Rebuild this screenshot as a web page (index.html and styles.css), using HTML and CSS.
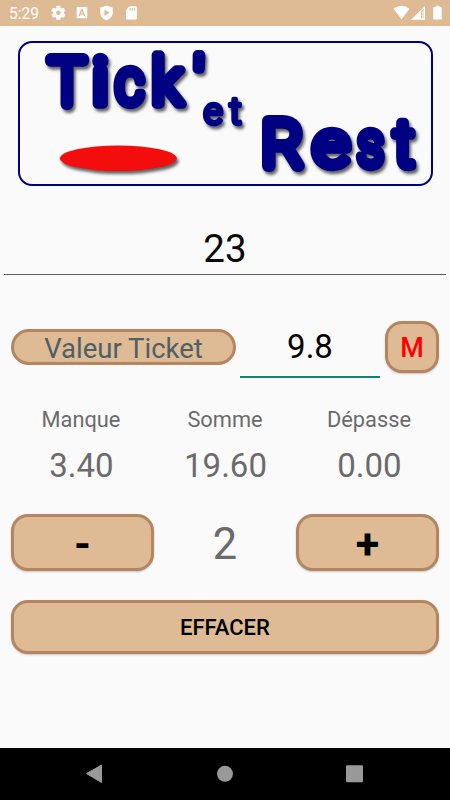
FILE: index.html
```
<!DOCTYPE html>
<html lang="fr">
<head>
<meta charset="utf-8">
<title>Tick' et Rest</title>
<link rel="stylesheet" href="styles.css">
</head>
<body>
<header class="status">
  <span class="clock">5:29</span>
  <svg class="status-left" width="90" height="16" viewBox="0 0 90 16" fill="#fff">
    <path fill-rule="evenodd" d="M5.500 0h4l.5 2.500 1.200.7 2.300-.9 2 3.400-1.900 1.500v1.600l1.900 1.500-2 3.400-2.300-.9-1.200.7-.5 2.500h-4l-.5-2.500-1.200-.7-2.300.9-2-3.400 1.900-1.500V7.200L-.5 5.700l2-3.400 2.300.9L5 2.500zM7.500 5.400a2.600 2.600 0 1 0 0 5.200 2.600 2.600 0 0 0 0-5.200z" transform="translate(.8 .8) scale(.88)"/>
    <path fill-rule="evenodd" d="M26.500 2h9a.8.8 0 0 1 .8.8v10.400h-10.600V2.800a.8.8 0 0 1 .8-.8zM30.100 4l-2.600 7h1.600l.5-1.500h2.600l.5 1.500h1.600l-2.600-7zM30.900 5.700l.9 2.600h-1.800zM34 11.500v.8h1.500v-.8z"/>
    <path fill-rule="evenodd" d="M55.500.5l6.300 2.300v4.500c0 4-2.700 6.500-6.300 8-3.600-1.500-6.300-4-6.300-8V2.800zM53.500 4.500v6.500l5.200-3.250z"/>
    <path fill-rule="evenodd" d="M78.500 1.300h6.200a1.200 1.200 0 0 1 1.200 1.200v10.800a1.200 1.200 0 0 1-1.200 1.200h-8.400a1.200 1.200 0 0 1-1.200-1.200V5zM78.700 3v2.500h1.100V3zm2.100 0v2.500h1.100V3zm2.100 0v2.500H84V3z"/>
  </svg>
  <svg class="status-right" width="50" height="16" viewBox="0 0 50 16" fill="#fff">
    <path d="M1.500 3.800Q9.500-2.300 17.500 3.800L9.500 14.200z"/>
    <path fill-rule="evenodd" d="M19 14.700L33 .9V14.700zM29 6.200V13.200h2.500V4z"/>
    <path d="M29.700 6h1.300v7h-1.300z" fill-opacity=".6"/>
    <path d="M43.800.8h3.400v1.300h1.700a.8.800 0 0 1 .8.800v10.800a.8.800 0 0 1-.8.800h-6.900a.8.800 0 0 1-.8-.8V2.900a.8.800 0 0 1 .8-.8h1.800z"/>
  </svg>
</header>

<main class="screen">
  <svg class="logo" width="416" height="146" viewBox="18 41 416 146">
    <rect x="19" y="42" width="413" height="143" rx="13" fill="none" stroke="#000082" stroke-width="2"/>
    <ellipse class="cast" cx="118.300" cy="158.300" rx="58.500" ry="12.800" fill="#f40d0d"/>
    <g class="cast word">
      <text class="big" y="103.500"><tspan class="cap" x="49" textLength="36" lengthAdjust="spacingAndGlyphs">T</tspan><tspan class="dotted" x="92.500">i</tspan><tspan x="115" textLength="29" lengthAdjust="spacingAndGlyphs">c</tspan><tspan x="151.500" textLength="31" lengthAdjust="spacingAndGlyphs">k</tspan><tspan x="193.500">'</tspan></text>
      <text class="small" y="123.500" x="203.500 229.500">et</text>
      <text class="big" y="165.500"><tspan class="cap" x="262">R</tspan><tspan x="312.500" textLength="37" lengthAdjust="spacingAndGlyphs">e</tspan><tspan x="357" textLength="27" lengthAdjust="spacingAndGlyphs">s</tspan><tspan x="394" textLength="20" lengthAdjust="spacingAndGlyphs">t</tspan></text>
    </g>
  </svg>

  <div class="amount">23</div>

  <section class="ticket">
    <div class="pill">Valeur Ticket</div>
    <div class="value">9.8</div>
    <button class="btn memory">M</button>
  </section>

  <section class="totals">
    <div><div class="label">Manque</div><div class="figure">3.40</div></div>
    <div><div class="label">Somme</div><div class="figure">19.60</div></div>
    <div><div class="label">Dépasse</div><div class="figure">0.00</div></div>
  </section>

  <section class="counter">
    <button class="btn step">-</button>
    <div class="count">2</div>
    <button class="btn step">+</button>
  </section>

  <button class="btn clear">EFFACER</button>
</main>

<nav class="navbar">
  <svg width="450" height="52" viewBox="0 0 450 52" fill="#999">
    <path d="M86.500 25.600L101.500 17v17.500z" stroke="#999" stroke-linejoin="round"/>
    <circle cx="225" cy="25.800" r="8"/>
    <rect x="346" y="17.300" width="17" height="17" rx="1"/>
  </svg>
</nav>
</body>
</html>
```

FILE: styles.css
```
* { box-sizing: border-box; }

body {
  margin: 0;
  width: 450px;
  height: 800px;
  display: flex;
  flex-direction: column;
  background: #fafafa;
  font-family: Roboto, sans-serif;
  overflow: hidden;
}

svg { display: block; }

.status {
  height: 26px;
  background: #debb95;
  display: flex;
  align-items: center;
  padding: 0 8px 0 9px;
  color: #fff;
}

.clock {
  width: 42px;
  font-size: 15.600px;
  line-height: 26px;
  padding-top: 2px;
}

.status-right { margin-left: auto; }

.screen {
  flex: 1;
  display: flex;
  flex-direction: column;
  padding-top: 15px;
}

.logo { margin-left: 18px; }

.cast { filter: drop-shadow(2px 3px 1.500px rgba(0, 0, 0, .6)); }

.word {
  fill: #000082;
  stroke: #000082;
  stroke-linejoin: round;
  stroke-linecap: round;
  font-weight: 300;
}

.big { font-size: 64px; stroke-width: 9.500px; }
.cap { font-weight: 100; font-size: 63px; stroke-width: 12px; }
.dotted { font-weight: 400; }
.small { font-size: 37px; stroke-width: 4.500px; }

.amount {
  margin: 35px 4px 0;
  height: 53px;
  border-bottom: 1px solid #5d5d5d;
  font-size: 38.500px;
  line-height: 53px;
  text-align: center;
  color: #0a0a0a;
}

.ticket {
  display: flex;
  align-items: flex-start;
  margin: 46px 11px 0;
  height: 58px;
}

.pill {
  width: 225px;
  height: 36px;
  margin-top: 8px;
  border: 3px solid #b38560;
  border-radius: 18px;
  background: #debb95;
  color: #4f5f64;
  font-size: 27.500px;
  line-height: 33px;
  text-align: center;
}

.value {
  width: 140px;
  height: 57px;
  margin: 0 5px 0 4px;
  border-bottom: 2px solid #108672;
  font-size: 33px;
  line-height: 52px;
  text-align: center;
  color: #000;
}

.btn {
  padding: 0;
  border: 3px solid #b38560;
  border-radius: 17px;
  background: #debb95;
  box-shadow: 0 1px 2px rgba(0, 0, 0, .22);
  font-family: inherit;
  font-weight: 500;
  color: #000;
}

.memory {
  width: 54px;
  height: 52px;
  font-size: 27px;
  line-height: 48px;
  color: #f00;
}

.totals {
  display: grid;
  grid-template-columns: repeat(3, 144px);
  margin: 28px 9px 0;
  text-align: center;
  color: #6b6b6b;
}

.label { font-size: 21.800px; line-height: 26px; }
.figure { margin-top: 13px; padding-left: 1px; font-size: 33px; line-height: 40px; }

.counter {
  display: flex;
  justify-content: space-between;
  margin: 28px 11px 0;
  height: 57px;
}

.step {
  width: 143px;
  font-size: 43px;
  font-weight: 700;
  line-height: 51px;
  padding-top: 2px;
}

.count { font-size: 43.500px; line-height: 62px; color: #6b6b6b; }

.clear {
  height: 54px;
  margin: 29px 11px 0;
  font-size: 22px;
  padding-top: 1px;
}

.navbar { height: 52px; background: #000; }
```
